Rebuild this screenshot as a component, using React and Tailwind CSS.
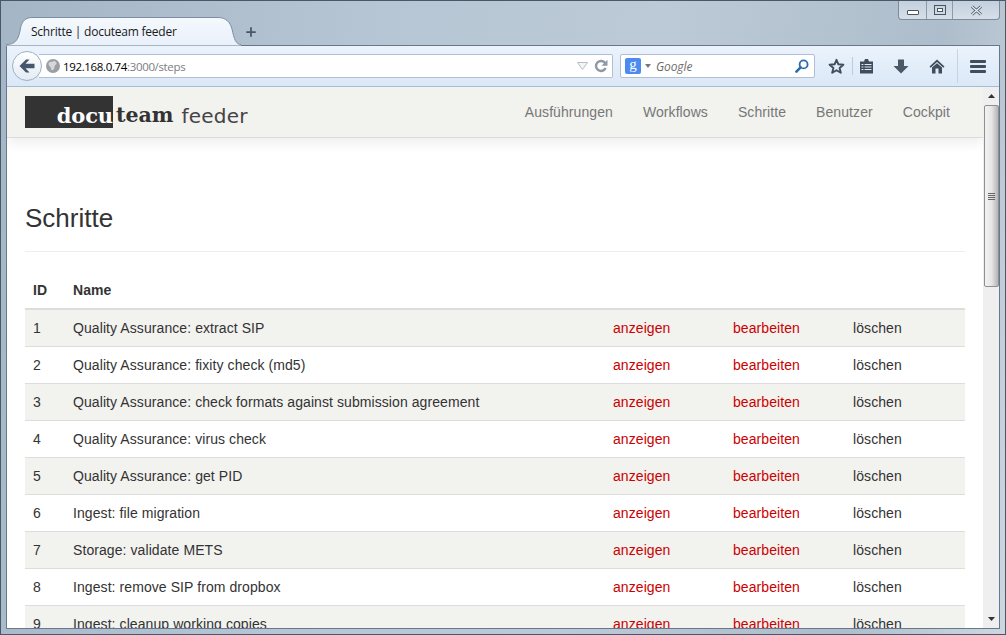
import { Plus } from 'lucide-react';

const STEPS = [
  'Quality Assurance: extract SIP',
  'Quality Assurance: fixity check (md5)',
  'Quality Assurance: check formats against submission agreement',
  'Quality Assurance: virus check',
  'Quality Assurance: get PID',
  'Ingest: file migration',
  'Storage: validate METS',
  'Ingest: remove SIP from dropbox',
  'Ingest: cleanup working copies',
];

const NAV = ['Ausführungen', 'Workflows', 'Schritte', 'Benutzer', 'Cockpit'];

function Tab() {
  return (
    <div className="relative z-10 -mb-px flex h-[29px] w-[235px] shrink-0 items-center pl-[25px]">
      <svg width="235" height="29" viewBox="0 0 235 29" className="absolute inset-0">
        <defs>
          <linearGradient id="tabFill" x1="0" y1="0" x2="0" y2="1">
            <stop offset="0" stopColor="#f5f9fd" />
            <stop offset="1" stopColor="#e8f0fa" />
          </linearGradient>
        </defs>
        <path
          d="M0 28.5 V27.5 C8 27.5 12 24 14 14 C15 6 18 0.5 26 0.5 H212 C220 0.5 224 5 226 12 C228 22 230 27.5 235 27.5 V28.5 Z"
          fill="url(#tabFill)"
        />
        <path
          d="M0 27.5 C8 27.5 12 24 14 14 C15 6 18 0.5 26 0.5 H212 C220 0.5 224 5 226 12 C228 22 230 27.5 235 27.5"
          fill="none"
          stroke="#7d8ea3"
        />
      </svg>
      <span className="relative text-[12px] tracking-[-0.24px] text-[#1a1a1a] [font-family:'Open_Sans',sans-serif]">
        Schritte | docuteam feeder
      </span>
    </div>
  );
}

function WindowControls() {
  return (
    <div className="ml-auto flex h-[19px] w-[102px] self-start rounded-b-[4px] border border-t-0 border-[#7f8b9a] bg-gradient-to-b from-[#c3d0dd] to-[#d6dfe9]">
      <div className="flex w-[28px] items-center justify-center border-r border-[#8e9aa8] pt-[5px]">
        <div className="h-[5px] w-[12px] rounded-[1px] border border-[#4a5563] bg-white" />
      </div>
      <div className="flex w-[26px] items-center justify-center border-r border-[#8e9aa8]">
        <div className="flex h-[10px] w-[12px] items-center justify-center border border-[#4a5563]">
          <div className="h-[4px] w-[6px] border border-[#4a5563] bg-white" />
        </div>
      </div>
      <div className="flex flex-1 items-center justify-center">
        <svg width="13" height="11" viewBox="0 0 13 11">
          <path d="M2 1.5 L11 9.5 M11 1.5 L2 9.5" stroke="#4a5563" strokeWidth="3" />
          <path d="M2 1.5 L11 9.5 M11 1.5 L2 9.5" stroke="#eef2f6" strokeWidth="1.2" />
        </svg>
      </div>
    </div>
  );
}

function BackArrow() {
  return (
    <svg width="16" height="14" viewBox="0 0 16 14">
      <path d="M7 0.5 L0.5 7 L7 13.5 H10.5 L6.5 9.2 H15.5 V4.8 H6.5 L10.5 0.5 Z" fill="#45576c" />
    </svg>
  );
}

function Reload() {
  return (
    <svg width="14" height="14" viewBox="0 0 14 14">
      <path d="M11.2 4.2 A5 5 0 1 0 11.6 9" fill="none" stroke="#8d99a6" strokeWidth="2.4" />
      <path d="M13.5 0.8 V6.8 H7.5 Z" fill="#8d99a6" />
    </svg>
  );
}

function Lens() {
  return (
    <svg width="14" height="14" viewBox="0 0 14 14">
      <circle cx="8.6" cy="5.4" r="4" fill="none" stroke="#2b6cab" strokeWidth="1.8" />
      <path d="M5.6 8.4 L1.4 12.6" stroke="#2b6cab" strokeWidth="2.6" strokeLinecap="round" />
    </svg>
  );
}

function StarIcon() {
  return (
    <svg width="17" height="17" viewBox="0 0 17 17">
      <path
        d="M8.5 1.8 L10.4 6.3 L15.4 6.7 L11.6 9.9 L12.8 14.8 L8.5 12.2 L4.2 14.8 L5.4 9.9 L1.6 6.7 L6.6 6.3 Z"
        fill="none"
        stroke="#414d5c"
        strokeWidth="1.9"
        strokeLinejoin="round"
      />
    </svg>
  );
}

function Clipboard() {
  return (
    <svg width="15" height="16" viewBox="0 0 15 16">
      <path d="M1 3.5 h4 l1 -2.5 h3 l1 2.5 h4 v12 h-13 z" fill="#414d5c" />
      <path d="M2.5 6.5h10M2.5 9h10M2.5 11.5h10" stroke="#dfe9f5" strokeWidth="1" />
      <path d="M5 5v8" stroke="#414d5c" strokeWidth="1.2" />
    </svg>
  );
}

function DownArrow() {
  return (
    <svg width="16" height="15" viewBox="0 0 16 15">
      <path d="M5 0.5 H11 V7 H15.5 L8 14.5 L0.5 7 H5 Z" fill="#4b5867" />
    </svg>
  );
}

function HomeIcon() {
  return (
    <svg width="16" height="15" viewBox="0 0 16 15">
      <path d="M8 0.5 L15.5 7.5 L14.3 8.7 L8 3 L1.7 8.7 L0.5 7.5 Z" fill="#414d5c" />
      <path d="M3 8.5 L8 4.2 L13 8.5 V14.5 H9.5 V9.5 H6.5 V14.5 H3 Z" fill="#414d5c" />
    </svg>
  );
}

function MenuIcon() {
  return (
    <svg width="16" height="13" viewBox="0 0 16 13">
      <rect x="0" y="0" width="16" height="3" rx="1" fill="#414d5c" />
      <rect x="0" y="5" width="16" height="3" rx="1" fill="#414d5c" />
      <rect x="0" y="10" width="16" height="3" rx="1" fill="#414d5c" />
    </svg>
  );
}

function Toolbar() {
  return (
    <div className="flex h-[42px] shrink-0 items-center border-y border-t-[#67788c] border-b-[#a9bbd0] bg-gradient-to-b from-[#ebf3fc] to-[#dbe8f7] pl-[5px]">
      <div className="z-10 flex h-[30px] w-[30px] shrink-0 items-center justify-center rounded-full border border-[#9fb0c4] bg-gradient-to-b from-white to-[#e3ebf4]">
        <BackArrow />
      </div>
      <div className="-ml-[3px] flex h-[24px] w-[574px] items-center rounded-r-[2px] border border-l-0 border-[#b0bfd1] bg-white pl-[7px] pr-[4px]">
        <svg width="14" height="14" viewBox="0 0 14 14" className="shrink-0">
          <circle cx="7" cy="7" r="7" fill="#9a9fa4" />
          <path d="M3 3.5c2-1.5 3 0 4-1s3 0 3.5 1.5-2 2-2 4-2 4-3 3-.5-3-1.5-3.5S2 5 3 3.5z" fill="#d5d7d9" />
        </svg>
        <span className="ml-[3px] pt-[2px] text-[11.5px] leading-none tracking-[-0.35px] text-black [font-family:'Open_Sans',sans-serif]">
          192.168.0.74<span className="text-[#7d7d7d]">:3000/steps</span>
        </span>
        <div className="ml-auto flex items-center gap-[6px]">
          <svg width="11" height="8" viewBox="0 0 11 8"><path d="M0.5 0.5h10L5.5 7.5z" fill="#f4f5f6" stroke="#b9bec4" /></svg>
          <Reload />
        </div>
      </div>
      <div className="ml-[7px] flex h-[24px] w-[195px] shrink-0 items-center rounded-[2px] border border-[#b0bfd1] bg-white pl-[4px] pr-[5px]">
        <div className="flex h-[16px] w-[16px] items-center justify-center rounded-[2px] bg-[#4c8bf0] pb-[3px] text-[15px] leading-none text-white [font-family:'Liberation_Serif',serif]">
          g
        </div>
        <svg width="6" height="4" viewBox="0 0 6 4" className="ml-[4px]"><path d="M0 0h6L3 4z" fill="#6f7780" /></svg>
        <span className="ml-[5px] pt-[2px] text-[12px] italic tracking-[-0.1px] text-[#6d6d6d] [font-family:'Open_Sans',sans-serif]">Google</span>
        <div className="ml-auto flex"><Lens /></div>
      </div>
      <div className="ml-[10px] flex w-[23px] justify-center"><StarIcon /></div>
      <div className="ml-[4px] h-[18px] w-px bg-[#bccbdc]" />
      <div className="ml-[5px] flex w-[16px] justify-center"><Clipboard /></div>
      <div className="ml-[19px] flex w-[16px] justify-center"><DownArrow /></div>
      <div className="ml-[19px] flex w-[18px] justify-center"><HomeIcon /></div>
      <div className="ml-[11px] h-[34px] w-px bg-[#c5d4e5]" />
      <div className="ml-[11px] flex w-[18px] justify-center"><MenuIcon /></div>
    </div>
  );
}

function Navbar() {
  return (
    <div className="flex h-[51px] shrink-0 items-start border-b border-[#dcdcdc] bg-[#f2f2ef] pl-[18px] pr-[18px] shadow-[0_5px_12px_rgba(0,0,0,0.07)]">
      <div className="mt-[9px] flex h-[32px] items-end">
        <div className="flex h-[32px] w-[88px] items-end justify-end bg-[#333333]">
          <span className="text-[21px] font-bold leading-[25px] tracking-[-0.1px] text-white [font-family:'DejaVu_Serif',serif]">docu</span>
        </div>
        <span className="ml-[3px] text-[20.5px] font-bold leading-[25px] text-[#333333] [font-family:'DejaVu_Serif',serif]">team</span>
        <span className="ml-[8px] text-[20px] leading-[23px] tracking-[0.2px] text-[#444444] [font-family:'DejaVu_Sans',sans-serif]">feeder</span>
      </div>
      <div className="ml-auto flex h-[50px] items-center gap-[30px] pr-[15px]">
        {NAV.map((n) => (
          <a key={n} className="text-[14px] tracking-[0.08px] text-[#777777]">{n}</a>
        ))}
      </div>
    </div>
  );
}

function StepsTable() {
  return (
    <table className="w-[940px] table-fixed border-collapse text-[14px] leading-[20px] tracking-[0.08px] text-[#333333]">
      <thead>
        <tr className="border-b-2 border-[#dddddd]">
          <th className="w-[40px] p-[8px] text-left font-bold">ID</th>
          <th className="w-[540px] p-[8px] text-left font-bold">Name</th>
          <th className="w-[120px] p-[8px]" />
          <th className="w-[120px] p-[8px]" />
          <th className="w-[120px] p-[8px]" />
        </tr>
      </thead>
      <tbody>
        {STEPS.map((name, i) => (
          <tr key={name} className={`border-b border-[#dddddd] ${i % 2 === 0 ? 'bg-[#f2f2ef]' : 'bg-white'}`}>
            <td className="p-[8px]">{i + 1}</td>
            <td className="p-[8px]">{name}</td>
            <td className="p-[8px] text-[#cc0000]">anzeigen</td>
            <td className="p-[8px] text-[#cc0000]">bearbeiten</td>
            <td className="p-[8px]">löschen</td>
          </tr>
        ))}
      </tbody>
    </table>
  );
}

function Scrollbar() {
  return (
    <div className="flex w-[16px] shrink-0 flex-col items-center bg-[#efefef]">
      <svg width="7" height="4" viewBox="0 0 7 4" className="mt-[7px]"><path d="M0 4h7L3.5 0z" fill="#333" /></svg>
      <div className="mt-[7px] flex h-[182px] w-[15px] items-center justify-center rounded-[2px] border border-[#8f8f8f] bg-gradient-to-r from-[#f2f2f2] via-[#e6e6e6] to-[#b4b4b4]">
        <div className="flex w-[7px] flex-col gap-[1px]">
          <div className="h-px bg-[#666]" />
          <div className="h-px bg-[#666]" />
          <div className="h-px bg-[#666]" />
          <div className="h-px bg-[#666]" />
        </div>
      </div>
      <svg width="7" height="4" viewBox="0 0 7 4" className="mb-[7px] mt-auto"><path d="M0 0h7L3.5 4z" fill="#333" /></svg>
    </div>
  );
}

export default function App() {
  return (
    <div className="flex h-[635px] w-[1006px] flex-col overflow-hidden border border-[#46586a] bg-[linear-gradient(100deg,#a4b5c6_0%,#b7c6d4_35%,#bccad7_60%,#aebdcb_85%,#cdd7e0_100%)] px-[5px] pb-[5px] [font-family:'Liberation_Sans',sans-serif]">
      <div className="flex h-[44px] shrink-0 items-end">
        <Tab />
        <div className="mb-[6px] ml-[3px] flex text-[#45576c]">
          <Plus size={14} strokeWidth={3} />
        </div>
        <WindowControls />
      </div>
      <div className="flex min-h-0 flex-1 flex-col border-x border-b border-[#67788c]">
        <Toolbar />
        <div className="flex min-h-0 flex-1 bg-white">
          <div className="min-w-0 flex-1 overflow-hidden">
            <Navbar />
            <div className="pl-[18px]">
              <h1 className="mt-[62px] text-[26px] font-normal leading-[36px] text-[#333333]">Schritte</h1>
              <div className="mb-[20px] mt-[15px] h-px w-[940px] bg-[#eeeeee]" />
              <StepsTable />
            </div>
          </div>
          <Scrollbar />
        </div>
      </div>
    </div>
  );
}
